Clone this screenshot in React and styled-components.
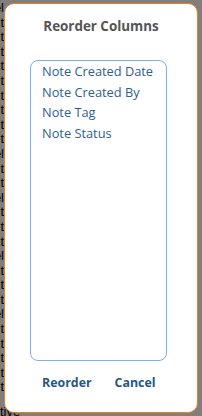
import React from 'react';
import styled, { createGlobalStyle } from 'styled-components';

const GlobalStyle = createGlobalStyle`
    html, body {
        margin: 0;
        padding: 0;
        width: 202px;
        height: 416px;
        overflow: hidden;
        background: #fff;
        font-family: "Open Sans", "Liberation Sans", sans-serif;
    }
`;

const Page = styled.div`
    width: 202px;
    height: 416px;
    position: relative;
    overflow: hidden;
`;

const BackText = styled.div`
    display: flex;
    flex-direction: column;
    align-items: flex-end;
    width: 4px;
    padding-top: 1px;
    font-family: "Liberation Sans", sans-serif;
    font-size: 13px;
    line-height: 14.6px;
    color: #000;
    span {
        white-space: nowrap;
    }
`;

const BottomText = styled.div`
    position: absolute;
    left: 0;
    top: 404px;
    font-family: "Liberation Sans", sans-serif;
    font-size: 13px;
    color: #000;
`;

const Overlay = styled.div`
    position: absolute;
    inset: 0;
    background: rgba(0, 0, 0, 0.5);
`;

const Modal = styled.div`
    position: absolute;
    left: 4px;
    top: 3px;
    width: 194px;
    height: 410px;
    box-sizing: border-box;
    background: #fff;
    border: 1px solid #f07c1a;
    border-radius: 10px;
    display: flex;
    flex-direction: column;
    align-items: flex-start;
`;

const Title = styled.h3`
    align-self: stretch;
    margin: 0;
    padding-top: 13px;
    text-align: center;
    font-size: 13.4px;
    font-weight: 700;
    line-height: 18px;
    color: #555;
`;

const ColumnList = styled.ul`
    list-style: none;
    margin: 25px 0 0 25px;
    padding: 0 0 0 11px;
    width: 137px;
    height: 301px;
    box-sizing: border-box;
    border: 1px solid #7eaef2;
    border-radius: 8px;
`;

const ColumnItem = styled.li`
    font-size: 12.8px;
    line-height: 20.7px;
    color: #2f6190;
    white-space: nowrap;
`;

const Actions = styled.div`
    display: flex;
    gap: 23px;
    margin: 13px 0 0 37px;
`;

const ActionButton = styled.button`
    border: none;
    background: none;
    padding: 0;
    font-family: inherit;
    font-size: 12.4px;
    font-weight: 700;
    line-height: 17px;
    color: #255785;
    cursor: pointer;
`;

const backLines = ['el', 't', 't', 't', 't', 't', 't', 't', 't', 't', 'el', 't', 't', 'el', 't', 't', 't', 'el', 't', 't', 't', 'el', 't', 't', 't', 't', 't'];

const columns = ['Note Created Date', 'Note Created By', 'Note Tag', 'Note Status'];

const App = () => {
    return (
        <Page>
            <GlobalStyle />
            <BackText>
                {backLines.map((t, i) => (
                    <span key={i}>{t}</span>
                ))}
            </BackText>
            <BottomText>tive</BottomText>
            <Overlay />
            <Modal>
                <Title>Reorder Columns</Title>
                <ColumnList>
                    {columns.map((c) => (
                        <ColumnItem key={c}>{c}</ColumnItem>
                    ))}
                </ColumnList>
                <Actions>
                    <ActionButton>Reorder</ActionButton>
                    <ActionButton>Cancel</ActionButton>
                </Actions>
            </Modal>
        </Page>
    );
};

export default App;
